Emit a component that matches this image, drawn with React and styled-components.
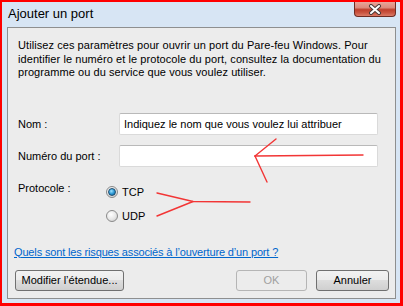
import React from 'react';
import styled, { createGlobalStyle } from 'styled-components';

const Global = createGlobalStyle`
  html, body { margin: 0; padding: 0; background: #ffffff; }
  body { font-family: "Liberation Sans", Arial, sans-serif; color: #000; }
  * { box-sizing: border-box; }
`;

const Window = styled.div`
  position: relative;
  width: 403px;
  height: 306px;
  border-style: solid;
  border-color: #ff0000;
  border-width: 2px 3px 3px 2px;
  background: #d7e5f4;
  display: flex;
  flex-direction: column;
  padding: 0 4px 4px 5px;
`;

const TitleBar = styled.div`
  height: 25px;
  display: flex;
  justify-content: space-between;
  align-items: flex-start;
`;

const Title = styled.div`
  font-size: 13px;
  line-height: 16px;
  margin: 4px 0 0 1px;
`;

const CloseButton = styled.div`
  width: 42px;
  height: 15px;
  border: 1px solid #6e2b22;
  border-top: none;
  border-radius: 0 0 4px 4px;
  background: linear-gradient(#e8a59a 0%, #dc8a7c 40%, #bf3f2c 55%, #c9533f 75%, #dc7a66 100%);
  display: flex;
  align-items: center;
  justify-content: center;
`;

const Panel = styled.div`
  flex: 1;
  border: 1px solid #8e8f8f;
  background: #ececec;
  display: flex;
  flex-direction: column;
`;

const Description = styled.p`
  margin: 11px 0 0 10px;
  font-size: 11px;
  line-height: 13.5px;
  letter-spacing: 0.07px;
`;

const FieldGrid = styled.div`
  margin: 33.5px 0 0 10px;
  display: grid;
  grid-template-columns: 101px 259px;
  row-gap: 10px;
  align-items: center;
`;

const Label = styled.span`
  font-size: 11px;
  line-height: 16px;
`;

const TextInput = styled.div`
  height: 22px;
  background: #ffffff;
  border: 1px solid #dadada;
  border-top-color: #b9b9b9;
  border-radius: 2px;
  padding: 0 4px;
  font-size: 11px;
  line-height: 20px;
  white-space: nowrap;
  overflow: hidden;
`;

const ProtocolRow = styled.div`
  margin: 13px 0 0 10px;
  display: flex;
  align-items: flex-start;
`;

const ProtocolLabel = styled(Label)`
  width: 88px;
`;

const RadioGroup = styled.div`
  margin-top: 4px;
  display: flex;
  flex-direction: column;
  gap: 7.5px;
`;

const RadioRow = styled.div`
  display: flex;
  align-items: center;
  height: 16px;
  gap: 4px;
  font-size: 11px;
`;

const RadioCircle = styled.span`
  width: 12px;
  height: 12px;
  border-radius: 50%;
  border: 1px solid #8a8a8a;
  background: radial-gradient(circle at 40% 35%, #ffffff 0%, #e6e6e6 55%, #c4c4c4 100%);
  display: flex;
  align-items: center;
  justify-content: center;

  &::after {
    content: "";
    display: ${(p) => (p.$checked ? 'block' : 'none')};
    width: 6px;
    height: 6px;
    border-radius: 50%;
    border: 1px solid #1d4c6e;
    background: radial-gradient(circle at 40% 35%, #9fe3ff 0%, #2f9ad6 50%, #0b5a8c 100%);
  }
`;

const HelpLink = styled.a`
  margin: 20px 0 0 6px;
  font-size: 11px;
  line-height: 16px;
  letter-spacing: -0.15px;
  color: #0066cc;
  text-decoration: underline;
  align-self: flex-start;
`;

const ButtonRow = styled.div`
  margin: 10px 6px 0 7px;
  display: flex;
  gap: 9px;
`;

const Button = styled.div`
  width: ${(p) => p.$w}px;
  height: 21px;
  border: 1px solid ${(p) => (p.$disabled ? '#b5b5b5' : '#707070')};
  border-radius: 3px;
  background: ${(p) =>
    p.$disabled
      ? '#ececec'
      : 'linear-gradient(#f2f2f2 0%, #ebebeb 50%, #dddddd 50%, #cfcfcf 100%)'};
  color: ${(p) => (p.$disabled ? '#a0a0a0' : '#000')};
  font-size: 11px;
  display: flex;
  align-items: center;
  justify-content: center;
  margin-left: ${(p) => (p.$pushRight ? 'auto' : '0')};
`;

const Overlay = styled.svg`
  position: absolute;
  top: -2px;
  left: -2px;
  width: 403px;
  height: 306px;
  pointer-events: none;
`;

export default function App() {
  return (
    <>
      <Global />
      <Window>
        <TitleBar>
          <Title>Ajouter un port</Title>
          <CloseButton>
            <svg width="14" height="11" viewBox="0 0 14 11">
              <path d="M3 2 L11 9 M11 2 L3 9" stroke="#4a3a38" strokeWidth="4" strokeLinecap="round" />
              <path d="M3 2 L11 9 M11 2 L3 9" stroke="#ffffff" strokeWidth="2" strokeLinecap="round" />
            </svg>
          </CloseButton>
        </TitleBar>
        <Panel>
          <Description>
            Utilisez ces paramètres pour ouvrir un port du Pare-feu Windows. Pour
            <br />
            identifier le numéro et le protocole du port, consultez la documentation du
            <br />
            programme ou du service que vous voulez utiliser.
          </Description>
          <FieldGrid>
            <Label>Nom :</Label>
            <TextInput>Indiquez le nom que vous voulez lui attribuer</TextInput>
            <Label>Numéro du port :</Label>
            <TextInput />
          </FieldGrid>
          <ProtocolRow>
            <ProtocolLabel>Protocole :</ProtocolLabel>
            <RadioGroup>
              <RadioRow>
                <RadioCircle $checked />
                TCP
              </RadioRow>
              <RadioRow>
                <RadioCircle />
                UDP
              </RadioRow>
            </RadioGroup>
          </ProtocolRow>
          <HelpLink>Quels sont les risques associés à l’ouverture d’un port ?</HelpLink>
          <ButtonRow>
            <Button $w={109}>Modifier l’étendue...</Button>
            <Button $w={71} $disabled $pushRight>OK</Button>
            <Button $w={73}>Annuler</Button>
          </ButtonRow>
        </Panel>
        <Overlay viewBox="0 0 403 306">
          <g stroke="#f23535" strokeWidth="1.4" fill="none" strokeLinecap="round">
            <path d="M255 156 L363 155" />
            <path d="M255 156 L276 139" />
            <path d="M255 156 L267 182" />
            <path d="M157 193 L193 201.5 L250 202" />
            <path d="M157 216 L193 201.5" />
          </g>
        </Overlay>
      </Window>
    </>
  );
}
